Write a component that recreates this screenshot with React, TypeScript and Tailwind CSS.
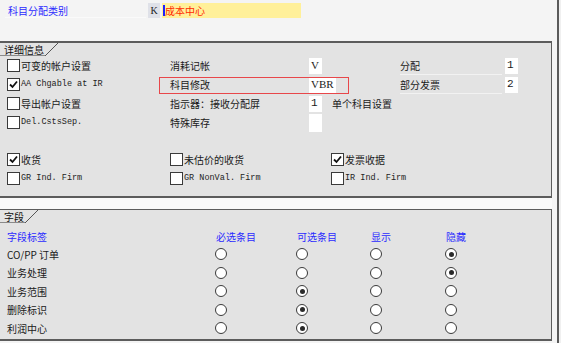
import React from 'react';

const cjk = "font-['Noto_Sans_CJK_SC','Noto_Sans',sans-serif]";
const mono = "font-['Liberation_Mono','Noto_Sans_CJK_SC',monospace]";
const serif = "font-['Liberation_Serif',serif]";

const Check: React.FC<{ checked?: boolean }> = ({ checked }) => (
  <span className="w-[13px] h-[13px] border border-[#3a3a3a] bg-white flex items-center justify-center shrink-0">
    {checked && (
      <svg width="9" height="9" viewBox="0 0 9 9">
        <path d="M1 4.5 L3.5 7 L8 1.5" fill="none" stroke="#111" strokeWidth="1.8" />
      </svg>
    )}
  </span>
);

const CheckItem: React.FC<{ checked?: boolean; label: string; latin?: boolean }> = ({ checked, label, latin }) => (
  <div className="flex items-center gap-px h-[19px]">
    <Check checked={checked} />
    <span className={latin ? `${mono} text-[8.5px] text-[#222]` : `${cjk} text-[10px] text-[#1a1a1a]`}>{label}</span>
  </div>
);

const Value: React.FC<{ text?: string; w?: string; h?: string; font?: string }> = ({ text, w = 'w-[13px]', h = 'h-[16px]', font = mono }) => (
  <span className={`${w} ${h} bg-white flex items-center pl-[2px] ${font} text-[11px] text-[#1a1a1a]`}>{text}</span>
);

const Radio: React.FC<{ on?: boolean }> = ({ on }) => (
  <span className="w-[12px] h-[12px] rounded-full border border-[#3a3a3a] bg-white flex items-center justify-center">
    {on && <span className="w-[5px] h-[5px] rounded-full bg-[#2a2a2a]" />}
  </span>
);

const Tab: React.FC<{ label: string }> = ({ label }) => (
  <div className="flex items-stretch h-[13px]">
    <span className={`${cjk} text-[10px] leading-[13px] text-[#111] pl-[4px] pr-[1px] border-b border-[#8a8a8a]`}>{label}</span>
    <svg width="13" height="13" viewBox="0 0 13 13">
      <line x1="0" y1="13" x2="13" y2="0" stroke="#555" strokeWidth="1" />
    </svg>
  </div>
);

const rows = [
  { label: 'CO/PP 订单', sel: 3 },
  { label: '业务处理', sel: 3 },
  { label: '业务范围', sel: 1 },
  { label: '删除标识', sel: 1 },
  { label: '利润中心', sel: 1 },
];

export default function App() {
  return (
    <div className={`w-[561px] h-[343px] flex bg-[#f4f4f4] overflow-hidden ${cjk}`}>
      <div className="w-[557px] flex flex-col">
        {/* header */}
        <div className="h-[41px] flex items-start pt-[3px]">
          <div className="ml-[5px] w-[141px] h-[15px] flex items-center pl-[3px] text-[10px] text-[#2b2bff] border-b border-[#fafafa]">
            科目分配类别
          </div>
          <div className={`ml-[2px] w-[12px] h-[15px] bg-[#dfe1e8] flex items-center justify-center ${serif} text-[10px] text-[#222]`}>K</div>
          <div className="ml-[2px] w-[139px] h-[15px] bg-[#fff09a] flex items-center pl-[1px]">
            <span className="w-[2px] h-[11px] bg-[#2020ff]" />
            <span className="text-[10px] text-[#ff2a00]">成本中心</span>
          </div>
        </div>

        {/* 详细信息 */}
        <div className="relative w-[552px] h-[157px] border-t-2 border-b-2 border-r border-[#5c5c5c] bg-[#e3e3e3]">
          <Tab label="详细信息" />
          <div className="grid grid-cols-[163px_139px_91px_105px_1fr] pl-[7px] text-[10px] text-[#1a1a1a]">
            <CheckItem label="可变的帐户设置" />
            <div className="h-[19px] flex items-center">消耗记帐</div>
            <div className="h-[19px] flex items-center"><Value text="V" font={serif} /></div>
            <div className="h-[19px] flex items-center border-b border-[#f2f2f2] mr-[3px]">分配</div>
            <div className="h-[19px] flex items-center"><Value text="1" /></div>

            <CheckItem checked latin label="AA Chgable at IR" />
            <div className="h-[19px] flex items-center">科目修改</div>
            <div className="h-[19px] flex items-center"><Value text="VBR" w="w-[27px]" font={serif} /></div>
            <div className="h-[19px] flex items-center border-b border-[#f2f2f2] mr-[3px]">部分发票</div>
            <div className="h-[19px] flex items-center"><Value text="2" /></div>

            <CheckItem label="导出帐户设置" />
            <div className="h-[19px] flex items-center">指示器：接收分配屏</div>
            <div className="h-[19px] flex items-center gap-[10px]"><Value text="1" /><span className="whitespace-nowrap">单个科目设置</span></div>
            <div />
            <div />

            <CheckItem latin label="Del.CstsSep." />
            <div className="h-[19px] flex items-center">特殊库存</div>
            <div className="h-[19px] flex items-center"><Value h="h-[18px]" /></div>
            <div />
            <div />
          </div>
          <div className="grid grid-cols-[163px_161px_1fr] pl-[7px] mt-[18px]">
            <CheckItem checked label="收货" />
            <CheckItem label="未估价的收货" />
            <CheckItem checked label="发票收据" />
            <CheckItem latin label="GR Ind. Firm" />
            <CheckItem latin label="GR NonVal. Firm" />
            <CheckItem latin label="IR Ind. Firm" />
          </div>
          {/* highlight annotation */}
          <div className="absolute left-[159px] top-[34px] w-[190px] h-[17px] border border-[#e8474a]" />
        </div>

        <div className="h-[11px] w-[552px] bg-[#f9f9f9]" />

        {/* 字段 */}
        <div className="w-[552px] h-[132px] border-t border-b-2 border-r border-[#5c5c5c] bg-[#e3e3e3]">
          <Tab label="字段" />
          <div className="grid grid-cols-[209px_81px_74px_75px_1fr] pl-[7px] pt-[4px] text-[10px]">
            <div className="h-[18px] flex items-center text-[#2b2bff]">字段标签</div>
            <div className="h-[18px] flex items-center text-[#2b2bff]">必选条目</div>
            <div className="h-[18px] flex items-center text-[#2b2bff]">可选条目</div>
            <div className="h-[18px] flex items-center text-[#2b2bff]">显示</div>
            <div className="h-[18px] flex items-center text-[#2b2bff]">隐藏</div>
            {rows.map((r) => (
              <React.Fragment key={r.label}>
                <div className="h-[18.5px] flex items-center text-[#1a1a1a]">{r.label}</div>
                {[0, 1, 2, 3].map((c) => (
                  <div key={c} className="h-[18.5px] flex items-center -ml-px">
                    <Radio on={r.sel === c} />
                  </div>
                ))}
              </React.Fragment>
            ))}
          </div>
        </div>
      </div>
      <div className="w-[2px] bg-[#5a5a5a]" />
      <div className="flex-1 bg-[#f0f0f0]" />
    </div>
  );
}
